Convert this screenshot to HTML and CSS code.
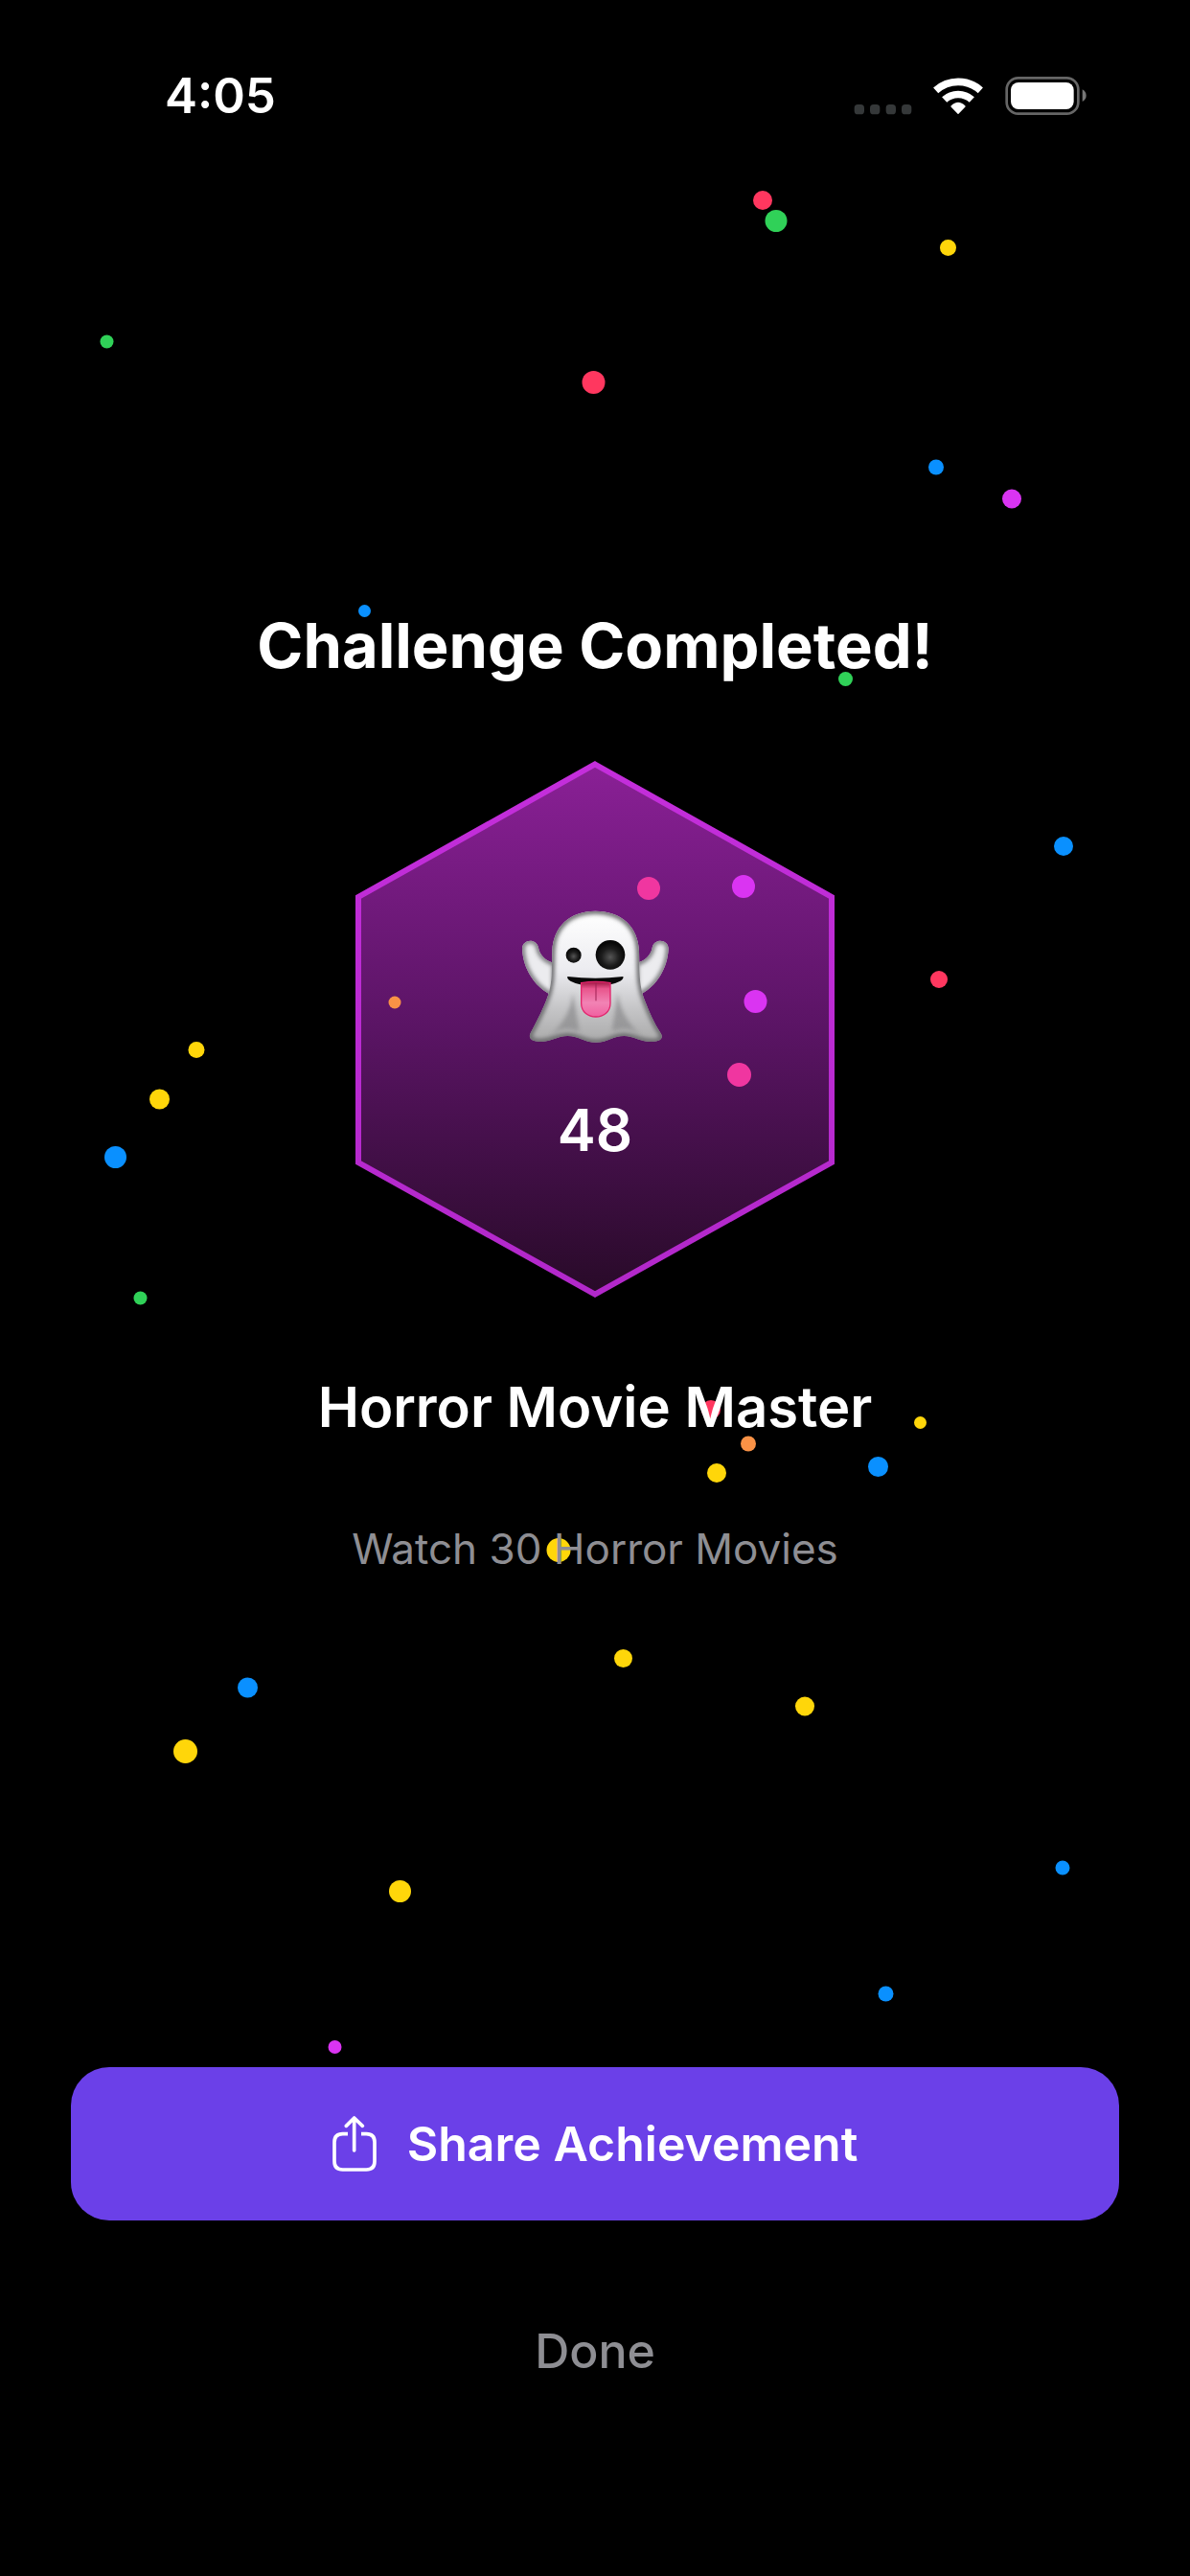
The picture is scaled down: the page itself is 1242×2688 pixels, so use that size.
FILE: index.html
```html
<!DOCTYPE html>
<html lang="en">

<head>
    <meta charset="UTF-8">
    <meta name="viewport" content="width=device-width, initial-scale=1.0">
    <title>Challenge Completed</title>
    <link rel="stylesheet" href="styles.css">
</head>

<body>
    <!-- confetti -->
    <svg class="confetti" viewBox="0 0 1242 2688" preserveAspectRatio="xMidYMid slice" aria-hidden="true">
        <g class="red">
            <circle cx="796" cy="209" r="10" />
            <circle cx="619.5" cy="399" r="12" />
            <circle cx="980" cy="1022" r="9" />
            <circle cx="742" cy="1471" r="10" />
        </g>
        <g class="pink">
            <circle cx="677" cy="927" r="12" />
            <circle cx="771.5" cy="1121.5" r="12.5" />
        </g>
        <g class="green">
            <circle cx="810" cy="230.5" r="11.5" />
            <circle cx="111.5" cy="356.5" r="7" />
            <circle cx="882.5" cy="708.5" r="7.5" />
            <circle cx="146.5" cy="1354.5" r="7" />
        </g>
        <g class="yellow">
            <circle cx="989.5" cy="258.5" r="8.5" />
            <circle cx="205" cy="1095.5" r="8.5" />
            <circle cx="166.5" cy="1147" r="10.5" />
            <circle cx="960.5" cy="1484.5" r="6.5" />
            <circle cx="748" cy="1537" r="10" />
            <circle cx="583" cy="1617.5" r="12.5" />
            <circle cx="650.5" cy="1730.5" r="9.5" />
            <circle cx="840" cy="1780.5" r="10" />
            <circle cx="193.5" cy="1827.5" r="12.5" />
            <circle cx="417.5" cy="1973.5" r="11.5" />
        </g>
        <g class="blue">
            <circle cx="977" cy="487.5" r="8" />
            <circle cx="380.5" cy="637.5" r="6.5" />
            <circle cx="1110" cy="883" r="10" />
            <circle cx="120.5" cy="1207.5" r="11.5" />
            <circle cx="916.5" cy="1530.5" r="10.5" />
            <circle cx="258.5" cy="1761" r="10.5" />
            <circle cx="1109" cy="1949" r="7.5" />
            <circle cx="924.5" cy="2080.5" r="8" />
        </g>
        <g class="purple">
            <circle cx="1056" cy="520.5" r="10" />
            <circle cx="776" cy="925" r="12" />
            <circle cx="788.5" cy="1045" r="12" />
            <circle cx="349.5" cy="2136" r="7" />
        </g>
        <g class="orange">
            <circle cx="412" cy="1046" r="6.5" />
            <circle cx="781" cy="1506.5" r="8" />
        </g>
    </svg>

    <header class="status-bar">
        <span class="time">4:05</span>
        <svg class="status-icons" viewBox="91 60 729 120" aria-hidden="true">
            <g fill="#353839">
                <rect x="93" y="147" width="31" height="31" rx="11" />
                <rect x="142" y="147" width="31" height="31" rx="11" />
                <rect x="192" y="147" width="31" height="31" rx="11" />
                <rect x="241" y="147" width="31" height="31" rx="11" />
            </g>
            <g fill="none" stroke="#fff" stroke-width="23">
                <path d="M348 103A104 104 0 0 1 488 103" />
                <path d="M375 132A64 64 0 0 1 461 132" />
            </g>
            <path d="M418 175L397 153Q418 132 439 153Z" fill="#fff" stroke="#fff" stroke-width="4" stroke-linejoin="round" />
            <rect x="570" y="64" width="224" height="112" rx="36" fill="none" stroke="#666" stroke-width="8" />
            <rect x="583" y="78" width="197" height="84" rx="24" fill="#fff" />
            <path d="M807 100Q819 107 819 119Q819 131 807 138Z" fill="#777" />
        </svg>
    </header>

    <main class="achievement">
        <h1>Challenge Completed!</h1>
        <div class="badge">
            <svg class="hexagon" viewBox="0 0 500 560" aria-hidden="true">
                <defs>
                    <linearGradient id="hexFill" x1="0" y1="0" x2="0" y2="1">
                        <stop offset="0" stop-color="#8a2096" />
                        <stop offset="0.5" stop-color="#5a1464" />
                        <stop offset="1" stop-color="#280a28" />
                    </linearGradient>
                    <linearGradient id="hexStroke" x1="0" y1="0" x2="0" y2="1">
                        <stop offset="0" stop-color="#c42edb" />
                        <stop offset="1" stop-color="#b228ca" />
                    </linearGradient>
                </defs>
                <path d="M250 3.500L497 142V419L250 556.500L3 419V142Z" fill="url(#hexFill)" stroke="url(#hexStroke)" stroke-width="6" />
            </svg>
            <div class="badge-content">
                <svg class="ghost" viewBox="68 91 465 416" role="img" aria-label="Ghost">
                    <defs>
                        <linearGradient id="body" x1="0" y1="0" x2="0" y2="1">
                            <stop offset="0" stop-color="#fff" />
                            <stop offset="0.45" stop-color="#ececf0" />
                            <stop offset="0.75" stop-color="#c4c4c6" />
                            <stop offset="1" stop-color="#aaa" />
                        </linearGradient>
                        <linearGradient id="tongue" x1="0" y1="0" x2="0" y2="1">
                            <stop offset="0" stop-color="#9c1440" />
                            <stop offset="0.2" stop-color="#e8558c" />
                            <stop offset="0.6" stop-color="#f283b4" />
                            <stop offset="1" stop-color="#f060a0" />
                        </linearGradient>
                        <radialGradient id="eye" cx="0.5" cy="0.58" r="0.5">
                            <stop offset="0" stop-color="#555" />
                            <stop offset="0.6" stop-color="#1c1c1c" />
                            <stop offset="1" stop-color="#080808" />
                        </radialGradient>
                        <filter id="soft" x="-20%" y="-20%" width="140%" height="140%">
                            <feGaussianBlur stdDeviation="6" />
                        </filter>
                        <clipPath id="armClip">
                            <path id="arms" d="M71 212C70 180 116 176 122 208C126 232 146 250 172 256V360C112 336 74 276 71 212ZM529 212C530 180 484 176 478 208C474 232 454 250 428 256V360C488 336 526 276 529 212Z" />
                        </clipPath>
                        <clipPath id="bodyClip">
                            <path id="ghostBody" d="M300 93C220 93 168 142 165 218C163 290 166 326 145 376C130 412 116 440 97 475C88 493 104 503 132 502C166 499 183 484 213 484C247 484 264 504 302 504C340 504 356 484 390 484C420 484 438 501 474 502C502 503 516 492 504 474C484 444 470 412 456 376C436 326 439 290 437 218C434 142 382 93 300 93Z" />
                        </clipPath>
                    </defs>
                    <use href="#arms" fill="#ececef" />
                    <g clip-path="url(#armClip)">
                        <use href="#arms" fill="none" stroke="#77777a" stroke-width="16" filter="url(#soft)" />
                    </g>
                    <use href="#ghostBody" fill="url(#body)" />
                    <g clip-path="url(#bodyClip)">
                        <path d="M230 350Q220 430 160 480Q200 450 250 470ZM370 350Q382 430 442 480Q402 450 352 470Z" fill="#8a8a8c" opacity="0.7" filter="url(#soft)" />
                        <use href="#ghostBody" fill="none" stroke="#6c6c6e" stroke-width="18" filter="url(#soft)" />
                    </g>
                    <circle cx="232" cy="231" r="24" fill="url(#eye)" />
                    <circle cx="347" cy="230" r="46" fill="url(#eye)" />
                    <path d="M213 298Q300 308 387 298Q390 304 378 312Q350 327 300 327Q250 327 222 312Q210 304 213 298Z" fill="#080808" />
                    <path d="M256 318Q301 310 347 318V382C347 438 256 438 256 382Z" fill="url(#tongue)" stroke="#e2246c" stroke-width="4" />
                    <path d="M302 318V374" stroke="#a02254" stroke-width="3" />
                </svg>
                <span class="count">48</span>
            </div>
        </div>
        <h2>Horror Movie Master</h2>
        <p>Watch 30 Horror Movies</p>
    </main>

    <footer class="actions">
        <button class="share" type="button">
            <svg viewBox="84 60 138 174" fill="none" stroke="#fff" stroke-width="11" stroke-linecap="round" stroke-linejoin="round" aria-hidden="true">
                <path d="M152 168V66M127 91L152 66L178 91" />
                <path stroke-linecap="butt" d="M132 116H116Q90 116 90 142V202Q90 228 116 228H190Q216 228 216 202V142Q216 116 190 116H174" />
            </svg>
            Share Achievement
        </button>
        <button class="done" type="button">Done</button>
    </footer>
</body>

</html>
```

FILE: styles.css
```css
* {
    box-sizing: border-box;
}

body {
    position: relative;
    display: flex;
    flex-direction: column;
    min-height: 100vh;
    margin: 0;
    background: #000;
    color: #fff;
    font-family: Inter, "Liberation Sans", sans-serif;
}

.confetti {
    position: absolute;
    top: 0;
    left: 0;
    z-index: 1;
    width: 100%;
    height: 100%;
    pointer-events: none;
}

.red { fill: #ff375f; }
.pink { fill: #f036a0; }
.green { fill: #30d158; }
.yellow { fill: #ffd60a; }
.blue { fill: #0a90ff; }
.purple { fill: #da34f2; }
.orange { fill: #fa9246; }

.status-bar {
    display: flex;
    justify-content: space-between;
    align-items: center;
    padding: 72px 108px 0 172px;
}

.time {
    font-size: 51px;
    font-weight: 600;
    line-height: 56px;
}

.status-icons {
    width: 243px;
    height: 40px;
}

.achievement {
    flex: 1;
    display: flex;
    flex-direction: column;
    align-items: center;
    justify-content: center;
    gap: 80px;
    padding-bottom: 2px;
    text-align: center;
}

h1,
h2,
p {
    position: relative;
    z-index: 2;
    margin: 0;
}

h1 {
    font-size: 65px;
    font-weight: 700;
    line-height: 80px;
}

h2 {
    font-size: 58px;
    font-weight: 600;
    line-height: 68px;
}

p {
    color: #8e8e93;
    font-size: 44px;
    line-height: 68px;
}

.badge {
    display: grid;
    width: 500px;
}

.hexagon,
.badge-content {
    grid-area: 1 / 1;
}

.hexagon {
    display: block;
    width: 100%;
}

.badge-content {
    display: flex;
    flex-direction: column;
    align-items: center;
    justify-content: center;
    gap: 50px;
    padding-top: 22px;
}

.ghost {
    width: 155px;
}

.count {
    font-size: 60px;
    font-weight: 600;
    line-height: 80px;
}

.actions {
    position: relative;
    z-index: 2;
    display: flex;
    flex-direction: column;
    gap: 76px;
    padding: 0 74px 175px;
}

button {
    border: none;
    font-family: inherit;
    font-size: 50px;
    cursor: pointer;
}

.share {
    display: flex;
    align-items: center;
    justify-content: center;
    gap: 32px;
    height: 160px;
    border-radius: 40px;
    background: #6b40e8;
    color: #fff;
    font-weight: 600;
}

.share svg {
    width: 46px;
    height: 58px;
}

.done {
    align-self: center;
    height: 120px;
    padding: 0 40px;
    background: none;
    color: #8e8e93;
    font-weight: 500;
}
```
